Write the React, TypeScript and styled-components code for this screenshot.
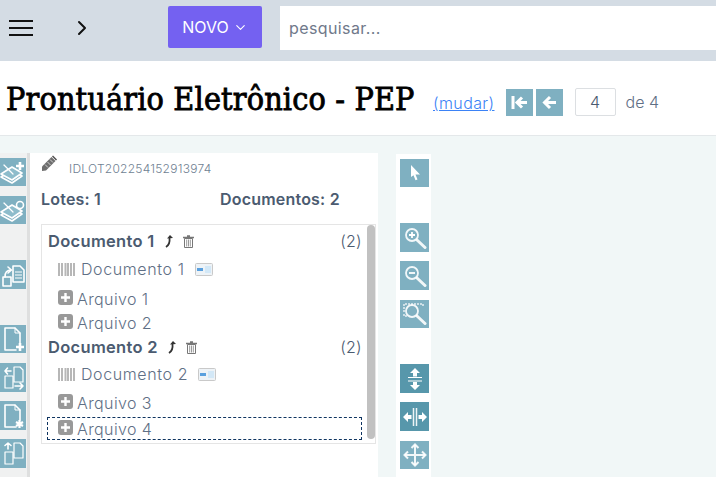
import styled, { createGlobalStyle } from 'styled-components';
import { ChevronDown, ChevronRight } from 'lucide-react';

const GlobalStyle = createGlobalStyle`
  html, body {
    margin: 0;
    padding: 0;
    height: 100%;
    overflow: hidden;
    background: #f1f7f7;
    font-family: Inter, 'Liberation Sans', sans-serif;
    color: #4b5b70;
  }
`;

const Page = styled.div`
  width: 716px;
  height: 477px;
  overflow: hidden;
`;

const TopBar = styled.header`
  height: 61px;
  box-sizing: border-box;
  padding: 6px 0 0 9px;
  background: #d4dce4;
  display: flex;
  align-items: flex-start;
`;

const MenuButton = styled.div`
  width: 24px;
  height: 44px;
  margin-right: 37px;
  display: flex;
  align-items: center;
  color: #111;
`;

const CollapseButton = styled.div`
  width: 24px;
  height: 44px;
  margin-right: 74px;
  display: flex;
  align-items: center;
  color: #111;
`;

const NewButton = styled.button`
  width: 94px;
  height: 42px;
  border: 0;
  border-radius: 2px;
  background: #7461f1;
  color: #fff;
  font: 400 16px Inter, sans-serif;
  display: flex;
  align-items: center;
  justify-content: center;
  gap: 4px;
  padding: 0;
  margin-right: 18px;
`;

const SearchBox = styled.div`
  flex: 1;
  height: 44px;
  box-sizing: border-box;
  padding-left: 9px;
  background: #fff;
  color: #70798a;
  font-size: 16px;
  letter-spacing: 0.4px;
  display: flex;
  align-items: center;
`;

const TitleBar = styled.div`
  height: 75px;
  box-sizing: border-box;
  background: #fff;
  border-bottom: 1px solid #e4e8ea;
  padding: 0 0 0 6px;
  display: flex;
  align-items: center;
`;

const Title = styled.h1`
  margin: 2px 18px 0 0;
  width: 409px;
  font: 400 32px 'DejaVu Serif Condensed', 'DejaVu Serif', serif;
  letter-spacing: 0.15px;
  -webkit-text-stroke: 0.8px #000;
  color: #000;
  white-space: nowrap;
`;

const Pager = styled.div`
  display: flex;
  align-items: center;
  margin-top: 8px;
`;

const ChangeLink = styled.a`
  margin: 2px 11px 0 0;
  font-size: 16px;
  font-weight: 300;
  letter-spacing: 0.4px;
  color: #3b82f6;
  text-decoration: underline;
`;

const PagerButton = styled.div`
  width: 27px;
  height: 27px;
  margin-right: 3px;
  background: #7fb0c1;
  display: flex;
  align-items: center;
  justify-content: center;
`;

const PageInput = styled.div`
  width: 41px;
  height: 28px;
  box-sizing: border-box;
  margin-left: 9px;
  border: 1px solid #dcdfe2;
  border-radius: 2px;
  background: #fff;
  font-size: 16px;
  font-weight: 300;
  display: flex;
  align-items: center;
  justify-content: center;
`;

const PageTotal = styled.span`
  margin-left: 10px;
  font-size: 16px;
  font-weight: 300;
  color: #5f6f85;
`;

const Workspace = styled.main`
  height: 341px;
  display: flex;
  align-items: flex-start;
`;

const LeftTools = styled.aside`
  width: 30px;
  height: 324px;
  margin-top: 17px;
  box-sizing: border-box;
  padding-top: 5px;
  background: #f0f1f1;
  border-right: 3px solid #dedfdf;
`;

const Tile = styled.div<{ $top?: number; $dark?: boolean; $wide?: boolean; $high?: number }>`
  width: ${(p) => (p.$wide ? 29 : 26)}px;
  height: ${(p) => p.$high ?? 28}px;
  margin-top: ${(p) => p.$top ?? 0}px;
  background: ${(p) => (p.$dark ? '#5797ab' : '#7fb0c1')};
  display: flex;
  align-items: center;
  justify-content: center;
`;

const Panel = styled.section`
  width: 348px;
  height: 324px;
  margin-top: 17px;
  box-sizing: border-box;
  padding: 1px 2px 0 11px;
  background: #fff;
`;

const LotRow = styled.div`
  height: 24px;
  box-sizing: border-box;
  padding-bottom: 2px;
  display: flex;
  align-items: flex-end;
  gap: 10px;
  font-size: 12px;
  font-weight: 300;
  letter-spacing: 0.25px;
  color: #6f7f92;
`;

const PencilSlot = styled.span`
  align-self: flex-start;
  display: flex;
`;

const CountRow = styled.div`
  margin-top: 6px;
  height: 30px;
  display: flex;
  align-items: center;
  font-size: 16px;
  font-weight: 600;
  letter-spacing: 0.2px;
  color: #4b5b70;
`;

const CountLabel = styled.span`
  width: 179px;
`;

const ListBox = styled.div`
  position: relative;
  width: 335px;
  height: 220px;
  margin-top: 10px;
  box-sizing: border-box;
  padding: 4px 0 0 5px;
  border: 1px solid #e5e5e5;
`;

const ScrollThumb = styled.div`
  position: absolute;
  top: 0;
  right: 0;
  width: 8px;
  height: 214px;
  border-radius: 4px;
  background: #c1c1c1;
`;

const DocHeading = styled.div`
  width: 315px;
  height: 24px;
  box-sizing: border-box;
  padding-left: 1px;
  display: flex;
  align-items: center;
  gap: 9px;
  font-size: 16.500px;
  font-weight: 600;
  letter-spacing: 0.3px;
  color: #4b5b70;
`;

const DocCount = styled.span`
  margin-left: auto;
  font-weight: 300;
  font-size: 16px;
`;

const DocLine = styled.div<{ $high: number }>`
  height: ${(p) => p.$high}px;
  box-sizing: border-box;
  padding: 0 0 2px 11px;
  display: flex;
  align-items: center;
  gap: 6px;
  font-size: 16px;
  font-weight: 300;
  letter-spacing: 0.6px;
  color: #5f6f85;
`;

const FileRow = styled.div<{ $focused?: boolean }>`
  width: 315px;
  height: ${(p) => (p.$focused ? 23 : 24)}px;
  margin-top: ${(p) => (p.$focused ? 2 : 0)}px;
  box-sizing: border-box;
  padding-left: 10px;
  display: flex;
  align-items: center;
  gap: 4px;
  font-size: 16px;
  font-weight: 300;
  letter-spacing: 0.4px;
  color: #5f6f85;
  border: 1px ${(p) => (p.$focused ? 'dashed #0f3460' : 'solid transparent')};
`;

const ExpandSlot = styled.span`
  margin-top: -3px;
  display: flex;
`;

const BadgeSlot = styled.span`
  margin-left: 4px;
  display: flex;
`;

const RightTools = styled.aside`
  width: 35px;
  height: 323px;
  margin: 18px 0 0 18px;
  box-sizing: border-box;
  padding: 5px 0 0 4px;
  background: #fff;
`;

const stroke = { fill: 'none', stroke: '#fff', strokeWidth: 1.6, strokeLinecap: 'round', strokeLinejoin: 'round' } as const;

const Hamburger = () => (
  <svg width="24" height="18" viewBox="0 0 24 18">
    <path d="M0 2h24M0 9h24M0 16h24" stroke="#111" strokeWidth="2" />
  </svg>
);

const FirstIcon = () => (
  <svg width="19" height="19" viewBox="0 0 19 19">
    <path d="M3 3v13" stroke="#fff" strokeWidth="3" />
    <path d="M7 9.500h10M12 4.500l-5 5 5 5" fill="none" stroke="#fff" strokeWidth="3" />
  </svg>
);

const PrevIcon = () => (
  <svg width="19" height="19" viewBox="0 0 19 19">
    <path d="M4 9.500h12M10 4l-5.500 5.500L10 15" fill="none" stroke="#fff" strokeWidth="3" />
  </svg>
);

const Pencil = () => (
  <svg width="18" height="18" viewBox="0 0 18 18">
    <path d="M1 12.500 10.500 3l4 4L5 16.500l-4 .5z" fill="#6e6e6e" />
    <path d="M12 1.500l4 4-1 1-4-4z" fill="#4d4d4d" />
    <path d="M4 10.500l3 3M6.500 8l3 3M9 5.500l3 3" stroke="#d0d0d0" strokeWidth="1" />
  </svg>
);

const Sheet = ({ mark }: { mark: 'plus' | 'dot' }) => (
  <svg width="26" height="26" viewBox="0 0 26 26">
    <path d="M1 18l11-7 10 6-10 7z" {...stroke} />
    <path d="M1 15l11-7 10 6-10 7z" {...stroke} fill="#8dbccb" />
    <path d="M4 6l9 9" {...stroke} strokeWidth={1.2} />
    {mark === 'plus' ? (
      <path d="M20 3v8M16 7h8" stroke="#fff" strokeWidth="2.600" />
    ) : (
      <circle cx="20" cy="8" r="3.500" {...stroke} />
    )}
  </svg>
);

const CopyDocs = () => (
  <svg width="26" height="26" viewBox="0 0 26 26">
    <path d="M13 4h7l4 4v12H13z" {...stroke} />
    <path d="M15 10h7M15 13h7M15 16h7" stroke="#fff" strokeWidth="1" />
    <path d="M3 24V15h8v9z" {...stroke} />
    <path d="M5 15c0-5 2-7 6-7M8 5l3.500 3L8 11" {...stroke} />
  </svg>
);

const NewDoc = ({ mark }: { mark: 'plus' | 'star' }) => (
  <svg width="26" height="28" viewBox="0 0 26 28">
    <path d="M16 25H5V3h10l5 5v10" {...stroke} />
    <path d="M15 3v5h5" {...stroke} strokeWidth={1} />
    {mark === 'plus' ? (
      <path d="M20 18v8M16 22h8" stroke="#fff" strokeWidth="2.600" />
    ) : (
      <path d="M19.500 18v8M16 20l7 4M23 20l-7 4" stroke="#fff" strokeWidth="2.200" />
    )}
  </svg>
);

const MoveDocs = ({ up }: { up?: boolean }) => (
  <svg width="26" height="28" viewBox="0 0 26 28">
    <path d="M14 3h6l3 3v12h-9z" {...stroke} strokeWidth={1.200} />
    <path d="M5 12h8v12H5z" {...stroke} strokeWidth={1.200} />
    {up ? (
      <path d="M8 9V3M5 5.500 8 3l3 2.500" {...stroke} />
    ) : (
      <>
        <path d="M11 7H5M7.500 4 5 7l2.500 3" {...stroke} />
        <path d="M15 22h8M20 19l3 3-3 3" {...stroke} />
      </>
    )}
  </svg>
);

const Cursor = () => (
  <svg width="20" height="20" viewBox="0 0 20 20">
    <path d="M6 2l9 9.500h-4.500l2 5-2 .8-2-5L6 14z" fill="#fff" />
  </svg>
);

const Magnifier = ({ mark }: { mark: 'plus' | 'minus' | 'box' }) => (
  <svg width="28" height="28" viewBox="0 0 28 28">
    {mark === 'box' && <path d="M3 12V4h19v3M3 14v2h3" fill="none" stroke="#fff" strokeWidth="1.500" strokeDasharray="2 1" opacity=".8" />}
    <circle cx="11" cy="11" r="6" fill="none" stroke="#fff" strokeWidth="1.800" opacity=".9" />
    <path d="M16 16l8 7.500" stroke="#fff" strokeWidth="3" strokeLinecap="round" opacity=".9" />
    {mark === 'plus' && <path d="M11 8v6M8 11h6" stroke="#fff" strokeWidth="1.800" />}
    {mark === 'minus' && <path d="M8 11h6" stroke="#fff" strokeWidth="1.800" />}
  </svg>
);

const FitHeight = () => (
  <svg width="28" height="28" viewBox="0 0 28 28">
    <path d="M14 3l5 5h-3v3.500h-4V8H9z" fill="#fff" />
    <path d="M7 12.500h14M7 16h14" stroke="#fff" strokeWidth="1.200" />
    <path d="M14 25l5-5h-3v-3h-4v3H9z" fill="#fff" />
  </svg>
);

const FitWidth = () => (
  <svg width="28" height="28" viewBox="0 0 28 28">
    <path d="M12.500 5v18M15.500 5v18" stroke="#fff" strokeWidth="1.500" opacity=".9" />
    <path d="M2 14l5-5v3h3.500v4H7v3z" fill="#fff" />
    <path d="M26 14l-5-5v3h-3.500v4H21v3z" fill="#fff" />
  </svg>
);

const MoveAll = () => (
  <svg width="28" height="28" viewBox="0 0 28 28">
    <path d="M14 4v20M4 14h20" stroke="#fff" strokeWidth="2" opacity=".9" />
    <path d="M10.500 7 14 3.500 17.500 7M10.500 21l3.500 3.500 3.500-3.500M7 10.500 3.500 14 7 17.500M21 10.500l3.500 3.500-3.500 3.500" fill="none" stroke="#fff" strokeWidth="2" opacity=".9" />
  </svg>
);

const Barcode = () => (
  <svg width="17" height="13" viewBox="0 0 17 13">
    <path d="M1 0v13M4 0v13M7.500 0v13M10 0v13M13 0v13M16 0v13" stroke="#b7b7b7" strokeWidth="2" />
  </svg>
);

const ExpandIcon = () => (
  <svg width="15" height="15" viewBox="0 0 15 15">
    <rect width="15" height="15" rx="3" fill="#999" />
    <path d="M7.500 3v9M3 7.500h9" stroke="#fff" strokeWidth="2.400" />
  </svg>
);

const SendIcon = () => (
  <svg width="10" height="14" viewBox="0 0 10 14">
    <path d="M2 13c3-2 4-5 3.500-9" fill="none" stroke="#333" strokeWidth="1.800" />
    <path d="M3 4.500 6 1l3 3z" fill="#333" />
  </svg>
);

const TrashIcon = () => (
  <svg width="11" height="13" viewBox="0 0 11 13">
    <path d="M0 2.500h11M4 1h3" stroke="#777" strokeWidth="1.300" />
    <path d="M1.500 3.500h8V12.500h-8z" fill="none" stroke="#777" />
    <path d="M3.700 4.500v7M5.500 4.500v7M7.300 4.500v7" stroke="#999" />
  </svg>
);

const LinkBadge = () => (
  <svg width="18" height="13" viewBox="0 0 18 13">
    <rect x=".5" y=".5" width="17" height="12" rx="1" fill="#eef3f7" stroke="#c9c9c9" />
    <rect x="2" y="5" width="6" height="3" fill="#5aa0de" />
    <rect x="10" y="3" width="6" height="7" fill="#d3e8f7" />
  </svg>
);

const FileItem = ({ name, focused }: { name: string; focused?: boolean }) => (
  <FileRow $focused={focused}>
    <ExpandSlot>
      <ExpandIcon />
    </ExpandSlot>
    {name}
  </FileRow>
);

const DocumentHead = ({ name, high }: { name: string; high: number }) => (
  <>
    <DocHeading>
      {name}
      <SendIcon />
      <TrashIcon />
      <DocCount>(2)</DocCount>
    </DocHeading>
    <DocLine $high={high}>
      <Barcode />
      {name}
      <BadgeSlot>
        <LinkBadge />
      </BadgeSlot>
    </DocLine>
  </>
);

const App = () => (
  <Page>
    <GlobalStyle />
    <TopBar>
      <MenuButton>
        <Hamburger />
      </MenuButton>
      <CollapseButton>
        <ChevronRight size={24} strokeWidth={2} />
      </CollapseButton>
      <NewButton>
        NOVO
        <ChevronDown size={15} strokeWidth={1.8} />
      </NewButton>
      <SearchBox>pesquisar...</SearchBox>
    </TopBar>
    <TitleBar>
      <Title>Prontuário Eletrônico - PEP</Title>
      <Pager>
        <ChangeLink>(mudar)</ChangeLink>
        <PagerButton>
          <FirstIcon />
        </PagerButton>
        <PagerButton>
          <PrevIcon />
        </PagerButton>
        <PageInput>4</PageInput>
        <PageTotal>de 4</PageTotal>
      </Pager>
    </TitleBar>
    <Workspace>
      <LeftTools>
        <Tile>
          <Sheet mark="plus" />
        </Tile>
        <Tile $top={10}>
          <Sheet mark="dot" />
        </Tile>
        <Tile $top={36} $high={29}>
          <CopyDocs />
        </Tile>
        <Tile $top={36}>
          <NewDoc mark="plus" />
        </Tile>
        <Tile $top={10} $high={29}>
          <MoveDocs />
        </Tile>
        <Tile $top={9} $high={29}>
          <NewDoc mark="star" />
        </Tile>
        <Tile $top={9} $high={29}>
          <MoveDocs up />
        </Tile>
      </LeftTools>
      <Panel>
        <LotRow>
          <PencilSlot>
            <Pencil />
          </PencilSlot>
          IDLOT202254152913974
        </LotRow>
        <CountRow>
          <CountLabel>Lotes: 1</CountLabel>
          Documentos: 2
        </CountRow>
        <ListBox>
          <ScrollThumb />
          <DocumentHead name="Documento 1" high={34} />
          <FileItem name="Arquivo 1" />
          <FileItem name="Arquivo 2" />
          <DocumentHead name="Documento 2" high={32} />
          <FileItem name="Arquivo 3" />
          <FileItem name="Arquivo 4" focused />
        </ListBox>
      </Panel>
      <RightTools>
        <Tile $wide>
          <Cursor />
        </Tile>
        <Tile $wide $top={36} $high={29}>
          <Magnifier mark="plus" />
        </Tile>
        <Tile $wide $top={9} $high={29}>
          <Magnifier mark="minus" />
        </Tile>
        <Tile $wide $top={10}>
          <Magnifier mark="box" />
        </Tile>
        <Tile $wide $top={36} $high={29} $dark>
          <FitHeight />
        </Tile>
        <Tile $wide $top={9} $high={29} $dark>
          <FitWidth />
        </Tile>
        <Tile $wide $top={10}>
          <MoveAll />
        </Tile>
      </RightTools>
    </Workspace>
  </Page>
);

export default App;
